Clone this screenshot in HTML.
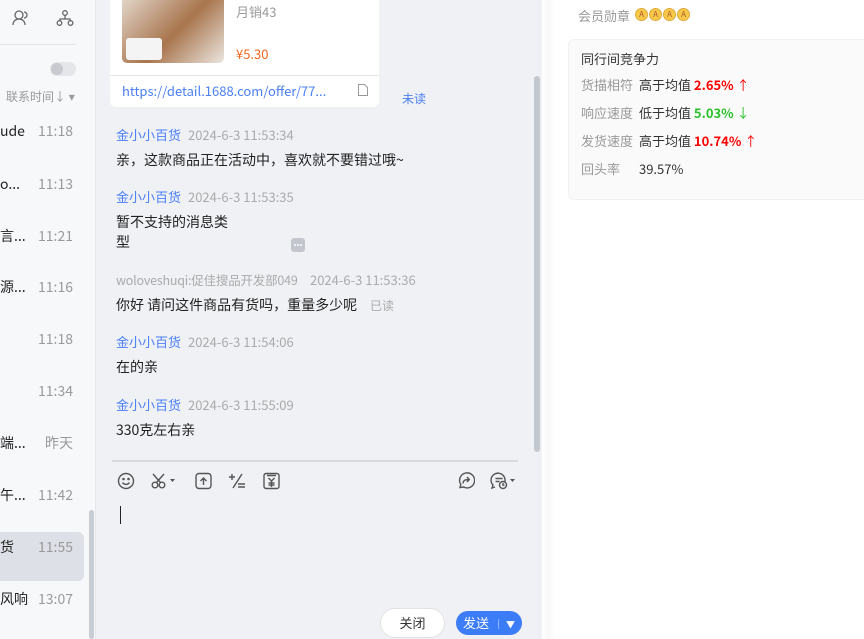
<!DOCTYPE html>
<html><head><meta charset="utf-8"><style>
*{margin:0;padding:0;box-sizing:border-box}
body{width:864px;height:639px;overflow:hidden;position:relative;background:#fff;font-family:"Noto Sans CJK SC","Liberation Sans",sans-serif;font-size:13px;line-height:18px;color:#222}
.a{position:absolute;white-space:nowrap}
#left{position:absolute;left:0;top:0;width:96px;height:639px;background:#f7f8fa;border-right:1px solid #e6e7ea}
#mid{position:absolute;left:96px;top:0;width:446px;height:639px;background:#f0f1f5}
.t{color:#999;font-size:14px;right:22px}
.n{color:#222;font-size:14px;left:0}
.nm{color:#4a7ff7;font-size:13px}
.ts{color:#aaa;font-size:13px}
.msg{font-size:14px;color:#222}
.ic{position:absolute;top:472px}
.md{display:inline-block;width:13px;height:13px;border-radius:50%;background:#f6c94a;border:1px solid #e0a93a;text-align:center;line-height:11px;font-size:8px;color:#b0552a;margin-right:1px}
</style></head><body>
<div id="left">
 <svg class="a" style="left:11px;top:9px" width="18" height="18" viewBox="0 0 18 18" fill="none" stroke="#666" stroke-width="1.3"><circle cx="8" cy="6" r="4"/><path d="M2 16c0-4 3-6 6-6s6 2 6 6"/><path d="M13 3a3 3 0 0 1 0 6"/></svg>
 <svg class="a" style="left:56px;top:9px" width="18" height="18" viewBox="0 0 18 18" fill="none" stroke="#666" stroke-width="1.3"><circle cx="9" cy="4" r="2.3"/><circle cx="3.5" cy="14" r="2.3"/><circle cx="14.5" cy="14" r="2.3"/><path d="M9 6.5v3M4 11.5v-1.5h10v1.5"/></svg>
 <div class="a" style="left:0;top:44px;width:76px;height:1px;background:#e3e4e7"></div>
 <div class="a" style="left:50px;top:62px;width:26px;height:14px;border-radius:7px;background:#e5e6ea"></div>
 <div class="a" style="left:51px;top:63px;width:12px;height:12px;border-radius:6px;background:#c8cacf"></div>
 <div class="a" style="left:6px;top:88px;color:#999;font-size:12px">联系时间↓ ▾</div>
 <div class="a n" style="top:122px">ude</div><div class="a t" style="top:122px">11:18</div>
 <div class="a n" style="top:175px">o...</div><div class="a t" style="top:175px">11:13</div>
 <div class="a n" style="top:227px">言...</div><div class="a t" style="top:227px">11:21</div>
 <div class="a n" style="top:278px">源...</div><div class="a t" style="top:278px">11:16</div>
 <div class="a t" style="top:330px">11:18</div>
 <div class="a t" style="top:382px">11:34</div>
 <div class="a n" style="top:434px">端...</div><div class="a t" style="top:434px">昨天</div>
 <div class="a n" style="top:486px">午...</div><div class="a t" style="top:486px">11:42</div>
 <div class="a" style="left:0;top:532px;width:84px;height:49px;background:#dde0e6;border-radius:0 6px 6px 0"></div>
 <div class="a n" style="top:538px">货</div><div class="a t" style="top:538px">11:55</div>
 <div class="a n" style="top:590px">风响</div><div class="a t" style="top:590px">13:07</div>
 <div class="a" style="left:89px;top:510px;width:5px;height:129px;border-radius:3px;background:#c8ccd3"></div>
</div>
<div id="mid">
 <div class="a" style="left:14px;top:-10px;width:269px;height:117px;background:#fff;border-radius:6px"></div>
 <div class="a" style="left:26px;top:-10px;width:102px;height:73px;border-radius:5px;background:linear-gradient(135deg,#e8dfd6,#a8754d 55%,#ece6e0)"></div>
 <div class="a" style="left:30px;top:38px;width:36px;height:22px;background:#f4f4f4;border-radius:3px"></div>
 <div class="a" style="left:140px;top:3px;color:#999;font-size:13px">月销43</div>
 <div class="a" style="left:140px;top:45px;color:#f3641c;font-size:13px">¥5.30</div>
 <div class="a" style="left:14px;top:75px;width:269px;height:1px;background:#e5e5e5"></div>
 <div class="a" style="left:26px;top:82px;color:#4a7ff7;font-size:13px">https://detail.1688.com/offer/77...</div>
 <svg class="a" style="left:262px;top:84px" width="10" height="12" viewBox="0 0 10 12" fill="none" stroke="#999"><path d="M.5.5h6l3 3v8h-9z"/></svg>
 <div class="a" style="left:306px;top:90px;color:#4a7ff7;font-size:12px">未读</div>
 <div class="a" style="left:438px;top:76px;width:6px;height:376px;border-radius:3px;background:#c3c8cf"></div>
 <div class="a nm" style="left:20px;top:126px">金小小百货</div><div class="a ts" style="left:92px;top:126px">2024-6-3 11:53:34</div>
 <div class="a msg" style="left:20px;top:151px">亲，这款商品正在活动中，喜欢就不要错过哦~</div>
 <div class="a nm" style="left:20px;top:188px">金小小百货</div><div class="a ts" style="left:92px;top:188px">2024-6-3 11:53:35</div>
 <div class="a msg" style="left:20px;top:213px">暂不支持的消息类</div>
 <div class="a msg" style="left:20px;top:233px">型</div>
 <div class="a" style="left:195px;top:238px;width:14px;height:14px;border-radius:3px;background:#c3c6cc"><svg width="14" height="14" style="display:block"><circle cx="4" cy="7" r="1" fill="#fff"/><circle cx="7" cy="7" r="1" fill="#fff"/><circle cx="10" cy="7" r="1" fill="#fff"/></svg></div>
 <div class="a" style="left:20px;top:271px;color:#aaa;font-size:12.5px;letter-spacing:-0.2px">woloveshuqi:促佳搜品开发部049</div><div class="a ts" style="left:214px;top:271px">2024-6-3 11:53:36</div>
 <div class="a msg" style="left:20px;top:296px">你好 请问这件商品有货吗，重量多少呢</div>
 <div class="a" style="left:274px;top:297px;color:#aaa;font-size:12px">已读</div>
 <div class="a nm" style="left:20px;top:333px">金小小百货</div><div class="a ts" style="left:92px;top:333px">2024-6-3 11:54:06</div>
 <div class="a msg" style="left:20px;top:358px">在的亲</div>
 <div class="a nm" style="left:20px;top:396px">金小小百货</div><div class="a ts" style="left:92px;top:396px">2024-6-3 11:55:09</div>
 <div class="a msg" style="left:20px;top:421px">330克左右亲</div>
 <div class="a" style="left:16px;top:460px;width:406px;height:2px;background:#d9dadd"></div>
 <svg class="ic" style="left:21px" width="18" height="18" viewBox="0 0 18 18" fill="none" stroke="#555" stroke-width="1.4"><circle cx="9" cy="9" r="7.5"/><circle cx="6.5" cy="7" r=".6" fill="#555"/><circle cx="11.5" cy="7" r=".6" fill="#555"/><path d="M5.5 10.5c1.5 2.5 5.5 2.5 7 0"/></svg>
 <svg class="ic" style="left:55px" width="26" height="18" viewBox="0 0 26 18" fill="none" stroke="#555" stroke-width="1.4"><circle cx="4" cy="13" r="2.8"/><circle cx="11" cy="13" r="2.8"/><path d="M5.5 10.5L13 2M9.5 10.5L2 2"/><path d="M19 7h5l-2.5 3z" fill="#555" stroke="none"/></svg>
 <svg class="ic" style="left:99px" width="17" height="18" viewBox="0 0 17 18" fill="none" stroke="#555" stroke-width="1.4"><rect x="1" y="1.5" width="15" height="15" rx="3"/><path d="M8.5 13V6M5.5 9l3-3 3 3"/></svg>
 <svg class="ic" style="left:132px" width="18" height="18" viewBox="0 0 18 18" fill="none" stroke="#555" stroke-width="1.4"><path d="M1 5h6M4 2v6M14 2L5 16M10 12h7M10 15h7"/></svg>
 <svg class="ic" style="left:167px" width="17" height="18" viewBox="0 0 17 18" fill="none" stroke="#555" stroke-width="1.4"><rect x="1" y="1.5" width="15" height="15" rx="2"/><path d="M4 3.5h9M5.5 6l3 3 3-3M8.5 9v6M5.5 11h6M5.5 13h6"/></svg>
 <svg class="ic" style="left:361px" width="18" height="18" viewBox="0 0 18 18" fill="none" stroke="#555" stroke-width="1.4"><path d="M3 15.5l.8-3A7.5 7.5 0 1 1 6.5 15z"/><path d="M6 11.5c0-3 2-4 6-4M10 5l2.3 2.5L10 10"/></svg>
 <svg class="ic" style="left:394px" width="28" height="18" viewBox="0 0 28 18" fill="none" stroke="#555" stroke-width="1.4"><path d="M11 14.5A7 7 0 1 0 3 13l-1 3 3-1"/><path d="M5.5 6.5h7M5.5 9.5h4"/><circle cx="13" cy="13" r="3.5" fill="#f0f1f5"/><path d="M13 11v2.2h1.5"/><path d="M20 7h5l-2.5 3z" fill="#555" stroke="none"/></svg>
 <div class="a" style="left:24px;top:506px;width:1px;height:18px;background:#222"></div>
 <div class="a" style="left:284px;top:608px;width:65px;height:30px;border-radius:15px;background:#fff;border:1px solid #e3e3e3;text-align:center;line-height:28px;font-size:13px;color:#333">关闭</div>
 <div class="a" style="left:360px;top:611px;width:66px;height:24px;border-radius:12px;background:#3c7cf6;color:#fff;font-size:13px;line-height:24px;padding-left:7px">发送<span style="display:inline-block;width:1px;height:10px;background:#8db0f9;margin:0 7px 0 9px;vertical-align:-1px"></span><span style="font-size:9px">▼</span></div>
</div>
<div class="a" style="left:542px;top:0;width:13px;height:639px;background:linear-gradient(90deg,#fff,#f8f8f9 50%,#fff)"></div>
<div class="a" style="left:578px;top:7px;color:#999;font-size:13px">会员勋章</div>
<div class="a" style="left:635px;top:8px;display:flex">
 <span class="md">A</span><span class="md">A</span><span class="md">A</span><span class="md">A</span>
</div>
<div class="a" style="left:568px;top:39px;width:310px;height:161px;background:#fafafa;border:1px solid #f0f0f0;border-radius:6px"></div>
<div class="a" style="left:581px;top:50px;font-size:13px;color:#333">同行间竞争力</div>
<div class="a" style="left:581px;top:76px;color:#999">货描相符</div><div class="a" style="left:639px;top:76px;color:#333">高于均值 <b style="color:#f00">2.65%</b> <span style="color:#f00">↑</span></div>
<div class="a" style="left:581px;top:104px;color:#999">响应速度</div><div class="a" style="left:639px;top:104px;color:#333">低于均值 <b style="color:#2bc02b">5.03%</b> <span style="color:#2bc02b">↓</span></div>
<div class="a" style="left:581px;top:132px;color:#999">发货速度</div><div class="a" style="left:639px;top:132px;color:#333">高于均值 <b style="color:#f00">10.74%</b> <span style="color:#f00">↑</span></div>
<div class="a" style="left:581px;top:160px;color:#999">回头率</div><div class="a" style="left:639px;top:160px;color:#333">39.57%</div>
</body></html>
